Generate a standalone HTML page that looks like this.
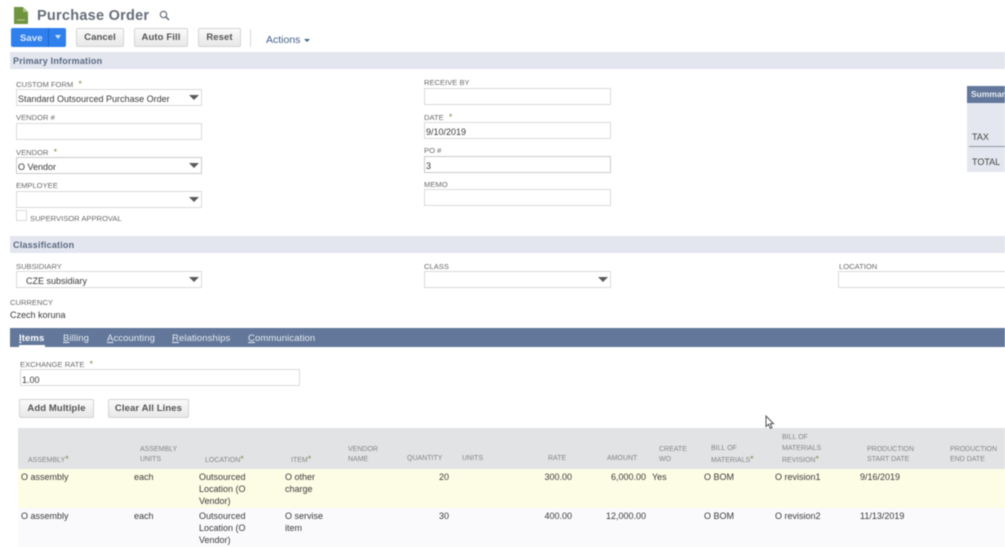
<!DOCTYPE html>
<html><head><meta charset="utf-8"><style>
html,body{margin:0;padding:0;background:#fff}
#p{position:relative;width:1005px;height:547px;overflow:hidden;background:#fff;font-family:"Liberation Sans",sans-serif;color:#444;filter:blur(.45px)}
#p div,#p span.a,#p svg{position:absolute}
.t{white-space:nowrap;font-size:9px;line-height:12px;color:#444}
.l{white-space:nowrap;font-size:7.6px;line-height:11px;color:#6a6a6a}
.l i{font-style:normal;color:#8a8a50;margin-left:3px;font-size:9px}
.f{box-sizing:border-box;border:1px solid #dadada;background:#fff;height:17px}
.v{white-space:nowrap;font-size:9px;line-height:12px;color:#3a3a3a}
.ar{width:0;height:0;border-left:5px solid transparent;border-right:5px solid transparent;border-top:5px solid #5a5a5a}
.b{box-sizing:border-box;border:1px solid #d4d4d4;border-radius:2px;background:linear-gradient(#fafafa,#e8e8e8);font-size:9.5px;font-weight:bold;color:#555;text-align:center;height:19px;line-height:18px;letter-spacing:.1px}
.s{left:10px;width:995px;height:17px;background:#e3e6ee;font-size:9px;font-weight:bold;color:#5a6880;line-height:18px;padding-left:3px;letter-spacing:.2px}
.h{font-size:7px;line-height:10px;color:#858585;white-space:nowrap}
.h i{font-style:normal;color:#8a8a50;font-size:9px}
.r{text-align:right}
.tab{top:333px;font-size:9.5px;line-height:12px;color:#e6ebf2;white-space:nowrap;letter-spacing:.1px}
u{text-decoration:underline}
</style></head><body><div id="p">

<svg style="left:13px;top:6px" width="16" height="19" viewBox="0 0 16 19"><path d="M1 1h9l5 5v12H1z" fill="#6f9440"/><path d="M10 1l5 5h-5z" fill="#a9c27e"/><path d="M4 14h8" stroke="#b5cb91" stroke-width="1"/></svg>
<div style="left:37px;top:8px;font-size:14.5px;line-height:17px;font-weight:bold;color:#666d7a;white-space:nowrap;letter-spacing:.25px">Purchase Order</div>
<svg style="left:159px;top:10px" width="11" height="11" viewBox="0 0 11 11"><circle cx="4.5" cy="4.5" r="3.2" fill="none" stroke="#5f6673" stroke-width="1.1"/><path d="M7 7l3 3" stroke="#5f6673" stroke-width="1.4"/></svg>

<div style="left:11px;top:28px;width:55px;height:19px;background:#2f80ed;border-radius:2px"></div>
<div style="left:48px;top:28px;width:1px;height:19px;background:#1f66c4"></div>
<div style="left:20px;top:32px;font-size:9.5px;line-height:13px;font-weight:bold;color:#dbe8fb;letter-spacing:.1px">Save</div>
<div class="ar" style="left:55px;top:35px;border-left-width:3px;border-right-width:3px;border-top:4px solid #cfe2fb"></div>
<div class="b" style="left:76px;top:28px;width:48px">Cancel</div>
<div class="b" style="left:134px;top:28px;width:54px">Auto Fill</div>
<div class="b" style="left:198px;top:28px;width:43px">Reset</div>
<div style="left:250px;top:29px;width:1px;height:18px;background:#d8d8d8"></div>
<div style="left:266px;top:34px;font-size:10.5px;line-height:13px;color:#42608a;white-space:nowrap">Actions</div>
<div class="ar" style="left:304px;top:39px;border-left-width:3px;border-right-width:3px;border-top:3px solid #42608a"></div>

<div class="s" style="top:52px">Primary Information</div>

<div class="l" style="left:16px;top:79px">CUSTOM FORM <i>*</i></div>
<div class="f" style="left:16px;top:89px;width:186px"></div>
<div class="v" style="left:18px;top:93px">Standard Outsourced Purchase Order</div>
<div class="ar" style="left:189px;top:95px"></div>

<div class="l" style="left:16px;top:112px">VENDOR #</div>
<div class="f" style="left:16px;top:123px;width:186px"></div>

<div class="l" style="left:16px;top:147px">VENDOR <i>*</i></div>
<div class="f" style="left:16px;top:157px;width:186px;border-color:#cacaca"></div>
<div class="v" style="left:18px;top:161px">O Vendor</div>
<div class="ar" style="left:189px;top:163px"></div>

<div class="l" style="left:16px;top:180px">EMPLOYEE</div>
<div class="f" style="left:16px;top:191px;width:186px"></div>
<div class="ar" style="left:189px;top:197px"></div>

<div class="f" style="left:16px;top:210px;width:11px;height:11px"></div>
<div class="l" style="left:30px;top:213px">SUPERVISOR APPROVAL</div>

<div class="l" style="left:424px;top:77px">RECEIVE BY</div>
<div class="f" style="left:424px;top:88px;width:187px"></div>
<div class="l" style="left:424px;top:112px">DATE <i>*</i></div>
<div class="f" style="left:424px;top:122px;width:187px"></div>
<div class="v" style="left:426px;top:126px">9/10/2019</div>
<div class="l" style="left:424px;top:145px">PO #</div>
<div class="f" style="left:424px;top:156px;width:187px;border-color:#cacaca"></div>
<div class="v" style="left:426px;top:160px">3</div>
<div class="l" style="left:424px;top:179px">MEMO</div>
<div class="f" style="left:424px;top:189px;width:187px"></div>

<div style="left:967px;top:86px;width:38px;height:86px;background:#e4e7ef"></div>
<div style="left:967px;top:86px;width:38px;height:17px;background:#62779a"></div>
<div style="left:971px;top:89px;font-size:8.5px;line-height:11px;font-weight:bold;color:#e8edf4;white-space:nowrap">Summary</div>
<div class="t" style="left:972px;top:131px">TAX</div>
<div style="left:969px;top:146px;width:36px;height:1px;background:#8f96a3"></div>
<div class="t" style="left:972px;top:156px">TOTAL</div>

<div class="s" style="top:236px">Classification</div>

<div class="l" style="left:16px;top:261px">SUBSIDIARY</div>
<div class="f" style="left:16px;top:271px;width:186px"></div>
<div class="v" style="left:26px;top:275px">CZE subsidiary</div>
<div class="ar" style="left:189px;top:277px"></div>

<div class="l" style="left:424px;top:261px">CLASS</div>
<div class="f" style="left:424px;top:271px;width:187px"></div>
<div class="ar" style="left:598px;top:277px"></div>

<div class="l" style="left:839px;top:261px">LOCATION</div>
<div class="f" style="left:838px;top:271px;width:170px"></div>

<div class="l" style="left:10px;top:297px">CURRENCY</div>
<div class="v" style="left:10px;top:309px">Czech koruna</div>

<div style="left:10px;top:328px;width:995px;height:19px;background:#62779a"></div>
<div class="tab" style="left:19px;font-weight:bold;color:#fff"><u>I</u>tems</div>
<div style="left:19px;top:345px;width:26px;height:2px;background:#fff"></div>
<div class="tab" style="left:63px"><u>B</u>illing</div>
<div class="tab" style="left:107px"><u>A</u>ccounting</div>
<div class="tab" style="left:172px"><u>R</u>elationships</div>
<div class="tab" style="left:248px"><u>C</u>ommunication</div>

<div class="l" style="left:20px;top:359px">EXCHANGE RATE <i>*</i></div>
<div class="f" style="left:20px;top:369px;width:280px"></div>
<div class="v" style="left:22px;top:374px">1.00</div>

<div class="b" style="left:19px;top:399px;width:75px">Add Multiple</div>
<div class="b" style="left:108px;top:399px;width:81px">Clear All Lines</div>

<div style="left:18px;top:428px;width:987px;height:41px;background:#e2e3e5"></div>
<div style="left:18px;top:469px;width:987px;height:39px;background:#fdfde6"></div>
<div style="left:18px;top:508px;width:987px;height:39px;background:#fafafc"></div>

<div class="h" style="left:28px;top:454px">ASSEMBLY<i>*</i></div>
<div class="h" style="left:140px;top:445px">ASSEMBLY<br>UNITS</div>
<div class="h" style="left:205px;top:454px">LOCATION<i>*</i></div>
<div class="h" style="left:291px;top:454px">ITEM<i>*</i></div>
<div class="h" style="left:348px;top:445px">VENDOR<br>NAME</div>
<div class="h" style="left:407px;top:454px">QUANTITY</div>
<div class="h" style="left:462px;top:454px">UNITS</div>
<div class="h" style="left:548px;top:454px">RATE</div>
<div class="h" style="left:607px;top:454px">AMOUNT</div>
<div class="h" style="left:659px;top:445px">CREATE<br>WO</div>
<div class="h" style="left:711px;top:443px;line-height:11px">BILL OF<br>MATERIALS<i>*</i></div>
<div class="h" style="left:782px;top:432px;line-height:11px">BILL OF<br>MATERIALS<br>REVISION<i>*</i></div>
<div class="h" style="left:867px;top:445px">PRODUCTION<br>START DATE</div>
<div class="h" style="left:950px;top:445px">PRODUCTION<br>END DATE</div>

<div class="v" style="left:21px;top:471px">O assembly</div>
<div class="v" style="left:134px;top:471px">each</div>
<div class="v" style="left:199px;top:471px">Outsourced<br>Location (O<br>Vendor)</div>
<div class="v" style="left:285px;top:471px">O other<br>charge</div>
<div class="v r" style="left:409px;top:471px;width:40px">20</div>
<div class="v r" style="left:532px;top:471px;width:40px">300.00</div>
<div class="v r" style="left:596px;top:471px;width:50px">6,000.00</div>
<div class="v" style="left:652px;top:471px">Yes</div>
<div class="v" style="left:704px;top:471px">O BOM</div>
<div class="v" style="left:775px;top:471px">O revision1</div>
<div class="v" style="left:860px;top:471px">9/16/2019</div>

<div class="v" style="left:21px;top:510px">O assembly</div>
<div class="v" style="left:134px;top:510px">each</div>
<div class="v" style="left:199px;top:510px">Outsourced<br>Location (O<br>Vendor)</div>
<div class="v" style="left:285px;top:510px">O servise<br>item</div>
<div class="v r" style="left:409px;top:510px;width:40px">30</div>
<div class="v r" style="left:532px;top:510px;width:40px">400.00</div>
<div class="v r" style="left:596px;top:510px;width:50px">12,000.00</div>
<div class="v" style="left:704px;top:510px">O BOM</div>
<div class="v" style="left:775px;top:510px">O revision2</div>
<div class="v" style="left:860px;top:510px">11/13/2019</div>

<svg style="left:765px;top:415px" width="10" height="15" viewBox="0 0 10 15"><path d="M1 1v10.5l2.6-2.2 1.7 4 1.7-.8-1.7-3.8h3.2z" fill="#fff" stroke="#444" stroke-width=".9"/></svg>
</div></body></html>
